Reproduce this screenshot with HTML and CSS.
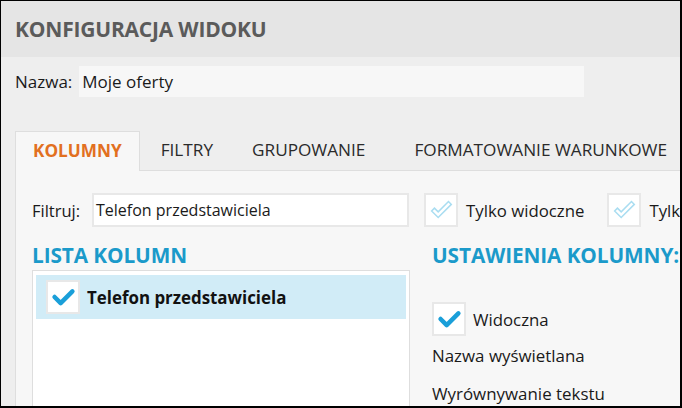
FILE: index.html
```html
<!DOCTYPE html>
<html lang="pl">
<head>
<meta charset="utf-8">
<title>Konfiguracja widoku</title>
<link rel="stylesheet" href="styles.css">
</head>
<body>
<div class="frame">
  <header class="header">
    <h1 class="title">KONFIGURACJA WIDOKU</h1>
  </header>
  <main class="main">
    <div class="name-row">
      <label class="label">Nazwa:</label>
      <div class="name-input">Moje oferty</div>
    </div>
    <nav class="tabs">
      <div class="tab tab-active">KOLUMNY</div>
      <div class="tab tab-filtry">FILTRY</div>
      <div class="tab tab-grup">GRUPOWANIE</div>
      <div class="tab tab-format">FORMATOWANIE WARUNKOWE</div>
    </nav>
    <section class="panel">
      <div class="filter-row">
        <label class="label filter-label">Filtruj:</label>
        <div class="filter-input">Telefon przedstawiciela</div>
        <div class="check-item">
          <span class="box">
            <svg class="icon" viewBox="0 0 32 32"><path d="M6 17 L13 24 L27 10 L24 7 L13 18 L9 14 Z" fill="none" stroke="#a9ddf1" stroke-width="1.6" stroke-linejoin="miter"/></svg>
          </span>
          <span class="check-text">Tylko widoczne</span>
        </div>
        <div class="check-item">
          <span class="box">
            <svg class="icon" viewBox="0 0 32 32"><path d="M6 17 L13 24 L27 10 L24 7 L13 18 L9 14 Z" fill="none" stroke="#a9ddf1" stroke-width="1.6" stroke-linejoin="miter"/></svg>
          </span>
          <span class="check-text">Tylko zaznaczone</span>
        </div>
      </div>
      <div class="columns">
        <div class="col-left">
          <h2 class="section-title">LISTA KOLUMN</h2>
          <div class="list">
            <div class="list-row">
              <span class="box">
                <svg class="icon" viewBox="0 0 32 32"><path d="M7 16 L13.5 22.5 L26 10" fill="none" stroke="#1a9fd9" stroke-width="4.8" stroke-linecap="round" stroke-linejoin="round"/></svg>
              </span>
              <span class="list-text">Telefon przedstawiciela</span>
            </div>
          </div>
        </div>
        <div class="col-right">
          <h2 class="section-title">USTAWIENIA KOLUMNY:</h2>
          <div class="check-item visible-item">
            <span class="box">
              <svg class="icon" viewBox="0 0 32 32"><path d="M7 16 L13.5 22.5 L26 10" fill="none" stroke="#1a9fd9" stroke-width="4.8" stroke-linecap="round" stroke-linejoin="round"/></svg>
            </span>
            <span class="check-text">Widoczna</span>
          </div>
          <div class="field-label">Nazwa wyświetlana</div>
          <div class="field-label field-label-2">Wyrównywanie tekstu</div>
        </div>
      </div>
    </section>
  </main>
</div>
</body>
</html>
```

FILE: styles.css
```css
* { box-sizing: border-box; }
html, body { margin: 0; padding: 0; }
body {
  width: 682px;
  height: 408px;
  overflow: hidden;
  font-family: "Open Sans", "Noto Sans", sans-serif;
  color: #1a1a1a;
  background: #000;
}
.frame {
  width: 682px;
  height: 408px;
  border-style: solid;
  border-color: #000;
  border-width: 1px 2px 2px 1px;
  background: #eeeeee;
  overflow: hidden;
  display: flex;
  flex-direction: column;
}
.header {
  height: 56px;
  flex: none;
  background: #e5e5e5;
  display: flex;
  align-items: center;
  padding-left: 14px;
}
.title {
  margin: 0;
  font-size: 21px;
  font-weight: 700;
  color: #5b5b5b;
  letter-spacing: -0.2px;
}
.main {
  flex: 1;
  padding: 9px 0 0 14px;
  display: flex;
  flex-direction: column;
  min-height: 0;
}
.name-row {
  display: flex;
  align-items: center;
  height: 31px;
}
.label {
  font-size: 17px;
  color: #1a1a1a;
  white-space: nowrap;
}
.name-input {
  margin-left: 7px;
  width: 505px;
  height: 31px;
  background: #f7f7f7;
  font-size: 17px;
  line-height: 31px;
  padding-left: 3px;
}
.tabs {
  display: flex;
  margin-top: 34px;
  height: 39px;
  flex: none;
  position: relative;
  z-index: 1;
}
.tab {
  font-size: 17.2px;
  color: #2a2a2a;
  line-height: 38px;
  padding: 0 19px;
  white-space: nowrap;
}
.tab-active {
  color: #e2701f;
  font-weight: 700;
  background: #f7f7f7;
  border: 1px solid #dedede;
  border-bottom: none;
  height: 40px;
  padding: 0 17px;
}
.tab-filtry { padding: 0 19px 0 21px; }
.tab-grup { padding: 0 24px 0 20px; }
.tab-format { padding-left: 25px; }
.panel {
  flex: 1;
  width: 700px;
  background: #f7f7f7;
  border-top: 1px solid #dedede;
  border-left: 1px solid #dedede;
  padding: 22px 0 0 16px;
  min-height: 0;
}
.filter-row {
  display: flex;
  align-items: center;
  height: 34px;
}
.filter-label { width: 60px; flex: none; font-size: 16.5px; }
.filter-input {
  width: 317px;
  height: 34px;
  background: #fff;
  border: 2px solid #e8e8e8;
  font-size: 16px;
  line-height: 30px;
  padding-left: 2px;
  flex: none;
}
.check-item {
  display: flex;
  align-items: center;
  margin-left: 15px;
  flex: none;
}
.check-item + .check-item { margin-left: 23px; }
.box {
  width: 34px;
  height: 34px;
  background: #fff;
  border: 2px solid #e8e8e8;
  display: flex;
  align-items: center;
  justify-content: center;
  flex: none;
}
.icon { width: 30px; height: 30px; }
.check-text {
  font-size: 16.8px;
  margin-left: 8px;
  white-space: nowrap;
}
.columns {
  display: flex;
  margin-top: 14px;
}
.col-left { width: 378px; flex: none; }
.col-right { margin-left: 22px; }
.section-title {
  margin: 0;
  font-size: 20.8px;
  font-weight: 700;
  color: #1b9aca;
  line-height: 28px;
  letter-spacing: -0.1px;
  white-space: nowrap;
}
.list {
  margin-top: 1px;
  height: 200px;
  background: #fff;
  border: 1px solid #dedede;
  padding: 4px 3px;
}
.list-row {
  height: 44px;
  background: #d1ecf7;
  display: flex;
  align-items: center;
  padding-left: 10px;
}
.list-text {
  font-size: 16.9px;
  font-weight: 700;
  margin-left: 7px;
  color: #111;
}
.visible-item {
  margin-left: 0;
  margin-top: 33px;
}
.visible-item .check-text { margin-left: 7px; }
.field-label {
  font-size: 16.9px;
  margin-top: 6px;
  line-height: 28px;
  white-space: nowrap;
}
.field-label-2 { margin-top: 10px; }
```
